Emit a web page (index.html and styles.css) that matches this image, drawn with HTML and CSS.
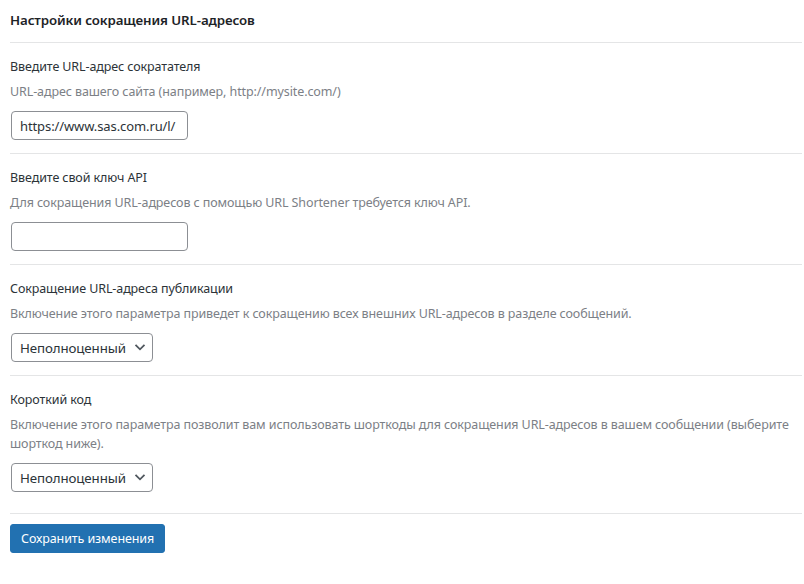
FILE: index.html
```html
<!DOCTYPE html>
<html lang="ru">
<head>
<meta charset="utf-8">
<title>Настройки сокращения URL-адресов</title>
<link rel="stylesheet" href="styles.css">
</head>
<body>
<div class="wrap">
  <h2 class="title">Настройки сокращения URL-адресов</h2>
  <div class="section">
    <div class="label">Введите URL-адрес сократателя</div>
    <div class="desc">URL-адрес вашего сайта (например, http://mysite.com/)</div>
    <input class="field" type="text" value="https://www.sas.com.ru/l/">
  </div>
  <div class="section">
    <div class="label">Введите свой ключ API</div>
    <div class="desc">Для сокращения URL-адресов с помощью URL Shortener требуется ключ API.</div>
    <input class="field" type="text" value="">
  </div>
  <div class="section">
    <div class="label">Сокращение URL-адреса публикации</div>
    <div class="desc">Включение этого параметра приведет к сокращению всех внешних URL-адресов в разделе сообщений.</div>
    <span class="select-wrap">
      <select class="select"><option>Неполноценный</option></select>
      <svg class="chev" width="14" height="14" viewBox="0 0 14 14"><path d="M2.5 4.8 L7 9.3 L11.5 4.8" fill="none" stroke="#50575e" stroke-width="1.8"/></svg>
    </span>
  </div>
  <div class="section last">
    <div class="label">Короткий код</div>
    <div class="desc">Включение этого параметра позволит вам использовать шорткоды для сокращения URL-адресов в вашем сообщении (выберите шорткод ниже).</div>
    <span class="select-wrap">
      <select class="select"><option>Неполноценный</option></select>
      <svg class="chev" width="14" height="14" viewBox="0 0 14 14"><path d="M2.5 4.8 L7 9.3 L11.5 4.8" fill="none" stroke="#50575e" stroke-width="1.8"/></svg>
    </span>
  </div>
  <div class="actions">
    <button class="btn" type="button">Сохранить изменения</button>
  </div>
</div>
</body>
</html>
```
FILE: styles.css
```css
html, body {
  margin: 0;
  padding: 0;
  background: #ffffff;
}
body {
  font-family: "Noto Sans", "Open Sans", sans-serif;
  font-size: 12.5px;
  letter-spacing: -0.1px;
  color: #1d2327;
}
.wrap {
  width: 792px;
  padding-left: 10px;
}
.title {
  margin: 0;
  padding-top: 10px;
  box-sizing: border-box;
  height: 43px;
  font-size: 13.3px;
  line-height: 20px;
  font-weight: 600;
  letter-spacing: -0.1px;
  color: #1d2327;
  border-bottom: 1px solid #e4e5e6;
}
.section {
  padding: 15px 0 13px;
  border-bottom: 1px solid #e4e5e6;
}
.section.last {
  padding-bottom: 21px;
}
.label {
  line-height: 18px;
  color: #2c3338;
}
.desc {
  margin-top: 6px;
  line-height: 19px;
  color: #7c8086;
}
.field {
  display: block;
  margin: 10px 0 0 1px;
  width: 177px;
  height: 29px;
  box-sizing: border-box;
  border: 1px solid #8c8f94;
  border-radius: 4px;
  padding: 0 8px;
  font-family: inherit;
  font-size: 13px;
  letter-spacing: -0.1px;
  color: #2c3338;
  background: #fff;
}
.select-wrap {
  position: relative;
  display: inline-block;
  margin: 10px 0 0 1px;
  vertical-align: top;
}
.select {
  display: block;
  -webkit-appearance: none;
  appearance: none;
  width: 142px;
  height: 29px;
  box-sizing: border-box;
  border: 1px solid #8c8f94;
  border-radius: 4px;
  padding: 0 24px 0 8px;
  font-family: inherit;
  font-size: 13.3px;
  letter-spacing: -0.1px;
  color: #2c3338;
  background: #fff;
}
.chev {
  position: absolute;
  right: 6px;
  top: 7px;
  pointer-events: none;
}
.actions {
  padding-top: 10px;
}
.btn {
  display: block;
  height: 29px;
  padding: 0 10px;
  border: 1px solid #2271b1;
  border-radius: 3px;
  background: #2271b1;
  color: #ffffff;
  font-family: inherit;
  font-size: 12.5px;
  letter-spacing: -0.1px;
  line-height: 27px;
}
```
